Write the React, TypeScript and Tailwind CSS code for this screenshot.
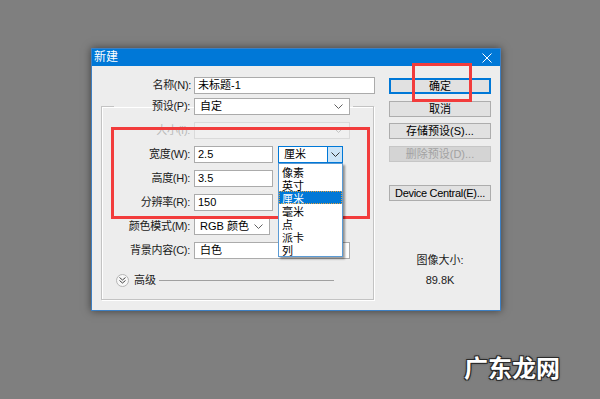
import React from 'react';

const units = ['像素', '英寸', '厘米', '毫米', '点', '派卡', '列'];

function Chevron({ className = 'text-[#606060]' }: { className?: string }) {
  return (
    <svg width="9" height="5" viewBox="0 0 9 5" className={className}>
      <path d="M0.5 0.5 L4.5 4.5 L8.5 0.5" fill="none" stroke="currentColor" strokeWidth="1" />
    </svg>
  );
}

function TextBox({ value, className }: { value: string; className: string }) {
  return (
    <div className={`h-[17px] bg-white border border-[#ababab] pl-[3px] text-[11px] leading-[15px] text-black ${className}`}>
      {value}
    </div>
  );
}

function Select({ value, className, disabled }: { value: string; className: string; disabled?: boolean }) {
  return (
    <div
      className={`h-[17px] flex items-center justify-between pl-[5px] pr-[6px] border text-[11px] leading-[15px] ${
        disabled ? 'bg-[#f0f0f0] border-[#dadada] text-[#a0a0a0]' : 'bg-white border-[#ababab] text-black'
      } ${className}`}
    >
      <span>{value}</span>
      <Chevron className={disabled ? 'text-[#c4c4c4]' : 'text-[#606060]'} />
    </div>
  );
}

function Row({ label, disabled, children }: { label: string; disabled?: boolean; children: React.ReactNode }) {
  return (
    <div className="flex items-center h-[17px]">
      <div className={`w-[88px] mr-[4px] text-right text-[11px] leading-[17px] tracking-[-0.3px] ${disabled ? 'text-[#b9b9b9]' : 'text-[#1a1a1a]'}`}>
        {label}
      </div>
      {children}
    </div>
  );
}

function Button({ label, primary, disabled, className = '' }: { label: string; primary?: boolean; disabled?: boolean; className?: string }) {
  return (
    <div
      className={`h-[16px] w-[102px] flex items-center justify-center whitespace-nowrap text-[11px] leading-[14px] border ${
        primary
          ? 'bg-[#e1e1e1] border-[#0078d7] shadow-[inset_0_0_0_1px_#0078d7] text-black'
          : disabled
          ? 'bg-[#d4d4d4] border-[#c6c6c6] text-[#a2a2a2]'
          : 'bg-[#e1e1e1] border-[#adadad] text-black'
      } ${className}`}
    >
      {label}
    </div>
  );
}

export default function App() {
  return (
    <div className="relative w-[600px] h-[399px] overflow-hidden bg-[#7f7f7f] pt-[48px] pl-[91px] font-['Liberation_Sans','Noto_Sans_CJK_SC',sans-serif]">
      {/* Dialog */}
      <div className="w-[410px] h-[263px] border border-[#3d7fc2] bg-[#ededed] shadow-[0_0_8px_rgba(0,0,0,0.5)] flex flex-col">
        {/* Title bar */}
        <div className="h-[17px] bg-[#0078d7] flex items-center justify-between pl-[2px] pr-[8px]">
          <span className="text-white text-[12px] leading-[17px]">新建</span>
          <svg width="10" height="10" viewBox="0 0 10 10">
            <path d="M0.5 0.5 L9.5 9.5 M9.5 0.5 L0.5 9.5" stroke="#fff" strokeWidth="1" />
          </svg>
        </div>

        {/* Body */}
        <div className="flex flex-1">
          {/* Left column */}
          <div className="w-[284px] pt-[11px]">
            <div className="flex items-center h-[17px]">
              <div className="w-[99px] mr-[3px] text-right text-[11px] leading-[17px] tracking-[-0.3px] text-[#1a1a1a]">名称(N):</div>
              <TextBox value="未标题-1" className="w-[181px]" />
            </div>

            <fieldset className="ml-[9px] mt-[4px] w-[273px] border border-[#c3c3c3] shadow-[inset_1px_1px_0_#fff,1px_1px_0_#fff] pb-[10px]">
              <legend className="ml-[12px] pl-[1px] pr-[3px] flex items-center h-[17px]">
                <span className="w-[75px] mr-[4px] text-right text-[11px] leading-[17px] tracking-[-0.3px] text-[#1a1a1a]">预设(P):</span>
                <Select value="自定" className="w-[156px]" />
              </legend>

              <div className="pt-[7px] flex flex-col gap-[7px]">
                <Row label="大小(I):" disabled>
                  <Select value="" className="w-[156px]" disabled />
                </Row>
                <Row label="宽度(W):">
                  <TextBox value="2.5" className="w-[79px]" />
                  <div className="relative ml-[5px] w-[65px] h-[17px] flex bg-white border border-[#0078d7]">
                    <span className="flex-1 pl-[5px] text-[11px] leading-[15px] text-black">厘米</span>
                    <div className="w-[15px] h-full bg-[#cce4f7] border-l border-[#0078d7] flex items-center justify-center">
                      <Chevron className="text-[#303030]" />
                    </div>
                    {/* Open dropdown list */}
                    <div className="absolute left-[-1px] top-[16px] w-[65px] pt-[1px] bg-white border border-[#5b9bd5] shadow-[2px_2px_2px_rgba(0,0,0,0.4)] z-10">
                      {units.map((u) => (
                        <div
                          key={u}
                          className={`h-[13px] pl-[3px] text-[11px] leading-[16px] ${
                            u === '厘米' ? 'bg-[#0078d7] text-white outline-1 outline-dotted outline-[#e0a040] -outline-offset-1' : 'text-black'
                          }`}
                        >
                          {u}
                        </div>
                      ))}
                    </div>
                  </div>
                </Row>
                <Row label="高度(H):">
                  <TextBox value="3.5" className="w-[79px]" />
                </Row>
                <Row label="分辨率(R):">
                  <TextBox value="150" className="w-[79px]" />
                </Row>
                <Row label="颜色模式(M):">
                  <Select value="RGB 颜色" className="w-[76px]" />
                </Row>
                <Row label="背景内容(C):">
                  <Select value="白色" className="w-[156px]" />
                </Row>

                <div className="mt-[5px] h-[18px] flex items-center pl-[14px]">
                  <div className="w-[13px] h-[13px] rounded-full border border-[#b5b5b5] bg-[#f7f7f7] flex items-center justify-center">
                    <svg width="7" height="7" viewBox="0 0 7 7">
                      <path d="M0.5 0.5 L3.5 3 L6.5 0.5 M0.5 3.5 L3.5 6 L6.5 3.5" fill="none" stroke="#444" strokeWidth="1" />
                    </svg>
                  </div>
                  <span className="ml-[5px] text-[11px] leading-[17px] text-[#1a1a1a]">高级</span>
                  <div className="ml-[3px] w-[175px] h-px bg-[#a0a0a0]" />
                </div>
              </div>
            </fieldset>
          </div>

          {/* Right column */}
          <div className="pl-[13px] pt-[12px] flex flex-col">
            <Button label="确定" primary />
            <Button label="取消" className="mt-[7px]" />
            <Button label="存储预设(S)..." className="mt-[6px]" />
            <Button label="删除预设(D)..." disabled className="mt-[7px]" />
            <Button label="Device Central(E)..." className="mt-[23px] tracking-[-0.3px]" />
            <div className="mt-[52px] w-[102px] text-center text-[11px] leading-[14px] text-[#1a1a1a]">图像大小:</div>
            <div className="mt-[6px] w-[102px] text-center text-[11px] leading-[14px] text-[#1a1a1a]">89.8K</div>
          </div>
        </div>
      </div>

      {/* Red annotation boxes */}
      <div className="absolute left-[111px] top-[127px] w-[259px] h-[92px] border-[3px] border-[#f23c3c]" />
      <div className="absolute left-[412px] top-[63px] w-[60px] h-[39px] border-[3px] border-[#f23c3c]" />

      {/* Watermark */}
      <div className="absolute left-[464px] top-[352px] text-[24px] leading-[30px] font-bold text-white font-['Noto_Sans_CJK_SC',sans-serif] [text-shadow:1px_1px_0_#2a2a2a,-1px_-1px_0_#2a2a2a,1px_-1px_0_#2a2a2a,-1px_1px_0_#2a2a2a,0_0_3px_#222]">
        广东龙网
      </div>
    </div>
  );
}
